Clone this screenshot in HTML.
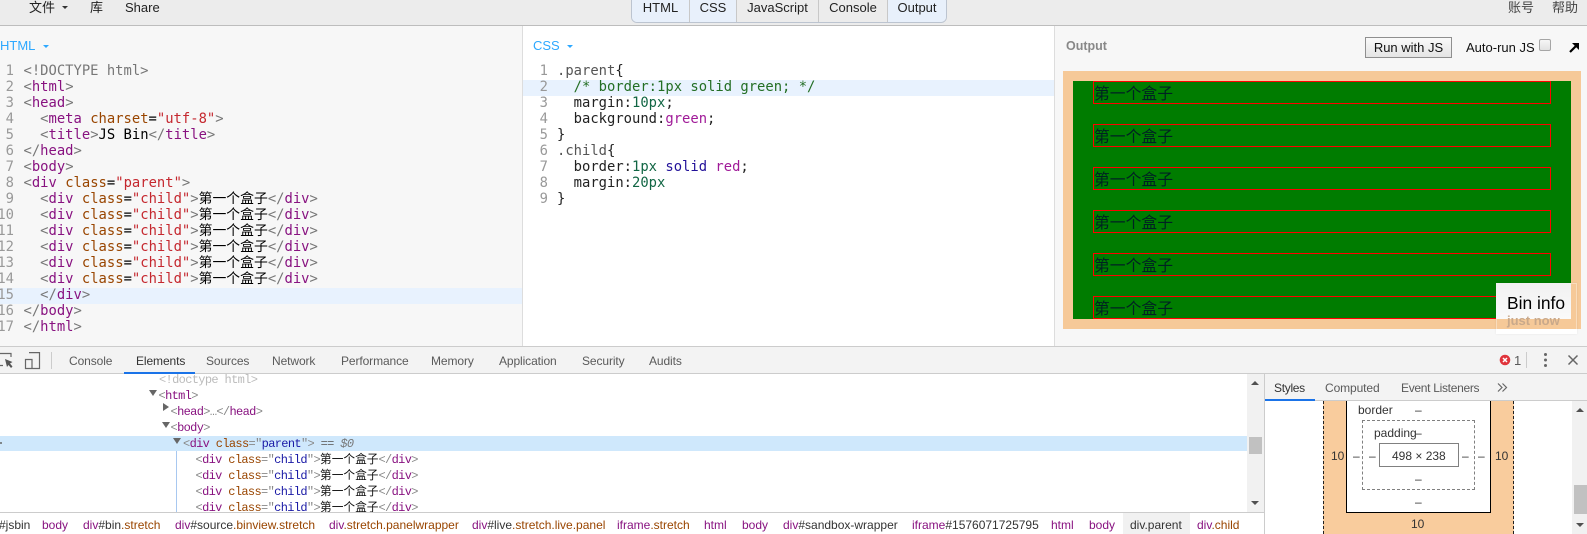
<!DOCTYPE html>
<html><head><meta charset="utf-8"><style>
html,body{margin:0;padding:0;background:#fff}
#r{position:relative;width:1587px;height:534px;overflow:hidden;font-family:"Liberation Sans","Noto Sans CJK SC",sans-serif;font-size:13px;color:#222}
.a,.b{position:absolute}
.a{white-space:pre;line-height:16px}
.code{position:absolute;font:13.85px/16px "DejaVu Sans Mono","WenQuanYi Zen Hei",monospace;white-space:pre;color:#333}
.code.n{color:#999;text-align:right}
.g{color:#777}.p{color:#881280}.o{color:#994500}.s{color:#c5282f}.k{color:#000}
.z{font-family:"WenQuanYi Zen Hei","Noto Sans CJK SC",sans-serif;color:#000;line-height:0}
.cm{color:#236e24}.nm{color:#116644}.kw{color:#a01a98}.at{color:#221199}.q{color:#555}
.t{position:absolute;left:0;font:12px/16px "Liberation Mono",monospace;letter-spacing:-.65px;white-space:pre;color:#888}
.t .p{color:#881280}.t .o{color:#994500}.t .l{color:#1a1aa6}
.t .z{font:11.7px/0 "WenQuanYi Zen Hei","Noto Sans CJK SC",sans-serif;letter-spacing:0;color:#111}
.dt{font-size:12px;color:#5a5a5a;letter-spacing:-.1px}
.bc{font-size:12px;color:#333}
.bc i{font-style:normal;color:#881280}.bc u{text-decoration:none;color:#994500}
.tab{position:absolute;top:0;height:22px;line-height:16px;text-align:center;color:#222;border-right:1px solid #c8c8c8;box-sizing:border-box;padding-top:0}
.box{position:absolute;left:1093px;width:458px;height:23px;box-sizing:border-box;border:1.3px solid #f00}
.bt{position:absolute;left:1094px;font:15.8px/22px "WenQuanYi Zen Hei","Noto Sans CJK SC",sans-serif;color:#022;white-space:pre}
.m{font-size:12px;color:#333}
</style></head><body><div id="r">
<!-- top bar -->
<div class="b" style="left:0;top:0;width:1587px;height:25px;background:#ececec;border-bottom:1px solid #bdbdbd"></div>
<span class="a" style="left:29px;top:0">文件</span>
<div class="b" style="left:62px;top:6px;border:3px solid transparent;border-top:3px solid #333;border-bottom:0"></div>
<span class="a" style="left:90px;top:0">库</span>
<span class="a" style="left:125px;top:0">Share</span>
<span class="a" style="left:1508px;top:0;color:#444">账号</span>
<span class="a" style="left:1552px;top:0;color:#444">帮助</span>
<div class="b" style="left:631px;top:-3px;width:316px;height:26px;border:1px solid #bcc4d0;border-radius:0 0 6px 6px;box-sizing:border-box;overflow:hidden;background:#ececec">
<div class="tab" style="left:0;width:58px;top:2px;background:#e8f0fb">HTML</div>
<div class="tab" style="left:58px;width:47px;top:2px;background:#e8f0fb">CSS</div>
<div class="tab" style="left:105px;width:82px;top:2px">JavaScript</div>
<div class="tab" style="left:187px;width:69px;top:2px">Console</div>
<div class="tab" style="left:256px;width:58px;top:2px;background:#e8f0fb;border-right:0">Output</div>
</div>
<!-- html panel -->
<div class="b" style="left:0;top:26px;width:522px;height:320px;background:#f7f7f7;border-right:1px solid #ddd"></div>
<div class="b" style="left:0;top:288px;width:522px;height:16px;background:#e8f2fe"></div>
<span class="a" style="left:0;top:38px;color:#2da8ff">HTML</span>
<div class="b" style="left:43px;top:45px;border:3px solid transparent;border-top:3px solid #2da8ff;border-bottom:0"></div>
<div class="code n" style="left:-10px;width:24px;top:63px">1
2
3
4
5
6
7
8
9
10
11
12
13
14
15
16
17</div>
<div class="code" style="left:23.5px;top:63px"><span class="g">&lt;!DOCTYPE html&gt;</span>
<span class="g">&lt;</span><span class="p">html</span><span class="g">&gt;</span>
<span class="g">&lt;</span><span class="p">head</span><span class="g">&gt;</span>
  <span class="g">&lt;</span><span class="p">meta</span> <span class="o">charset</span><span class="k">=</span><span class="s">"utf-8"</span><span class="g">&gt;</span>
  <span class="g">&lt;</span><span class="p">title</span><span class="g">&gt;</span><span class="k">JS Bin</span><span class="g">&lt;/</span><span class="p">title</span><span class="g">&gt;</span>
<span class="g">&lt;/</span><span class="p">head</span><span class="g">&gt;</span>
<span class="g">&lt;</span><span class="p">body</span><span class="g">&gt;</span>
<span class="g">&lt;</span><span class="p">div</span> <span class="o">class</span><span class="k">=</span><span class="s">"parent"</span><span class="g">&gt;</span>
  <span class="g">&lt;</span><span class="p">div</span> <span class="o">class</span><span class="k">=</span><span class="s">"child"</span><span class="g">&gt;</span><span class="z">第一个盒子</span><span class="g">&lt;/</span><span class="p">div</span><span class="g">&gt;</span>
  <span class="g">&lt;</span><span class="p">div</span> <span class="o">class</span><span class="k">=</span><span class="s">"child"</span><span class="g">&gt;</span><span class="z">第一个盒子</span><span class="g">&lt;/</span><span class="p">div</span><span class="g">&gt;</span>
  <span class="g">&lt;</span><span class="p">div</span> <span class="o">class</span><span class="k">=</span><span class="s">"child"</span><span class="g">&gt;</span><span class="z">第一个盒子</span><span class="g">&lt;/</span><span class="p">div</span><span class="g">&gt;</span>
  <span class="g">&lt;</span><span class="p">div</span> <span class="o">class</span><span class="k">=</span><span class="s">"child"</span><span class="g">&gt;</span><span class="z">第一个盒子</span><span class="g">&lt;/</span><span class="p">div</span><span class="g">&gt;</span>
  <span class="g">&lt;</span><span class="p">div</span> <span class="o">class</span><span class="k">=</span><span class="s">"child"</span><span class="g">&gt;</span><span class="z">第一个盒子</span><span class="g">&lt;/</span><span class="p">div</span><span class="g">&gt;</span>
  <span class="g">&lt;</span><span class="p">div</span> <span class="o">class</span><span class="k">=</span><span class="s">"child"</span><span class="g">&gt;</span><span class="z">第一个盒子</span><span class="g">&lt;/</span><span class="p">div</span><span class="g">&gt;</span>
  <span class="g">&lt;/</span><span class="p">div</span><span class="g">&gt;</span>
<span class="g">&lt;/</span><span class="p">body</span><span class="g">&gt;</span>
<span class="g">&lt;/</span><span class="p">html</span><span class="g">&gt;</span></div>
<!-- css panel -->
<div class="b" style="left:523px;top:80px;width:531px;height:16px;background:#e8f2fe"></div>
<span class="a" style="left:533px;top:38px;color:#2da8ff">CSS</span>
<div class="b" style="left:567px;top:45px;border:3px solid transparent;border-top:3px solid #2da8ff;border-bottom:0"></div>
<div class="code n" style="left:523px;width:25px;top:63px">1
2
3
4
5
6
7
8
9</div>
<div class="code" style="left:557px;top:63px;color:#222"><span class="q">.parent</span>{
  <span class="cm">/* border:1px solid green; */</span>
  margin:<span class="nm">10px</span>;
  background:<span class="kw">green</span>;
}
<span class="q">.child</span>{
  border:<span class="nm">1px</span> <span class="at">solid</span> <span class="kw">red</span>;
  margin:<span class="nm">20px</span>
}</div>
<!-- output panel -->
<div class="b" style="left:1054px;top:26px;width:533px;height:320px;background:#f7f7f7;border-left:1px solid #ddd;box-sizing:border-box"></div>
<span class="a" style="left:1066px;top:38px;color:#888;font-weight:bold;font-size:12.5px">Output</span>
<div class="b" style="left:1365px;top:37px;width:87px;height:21px;box-sizing:border-box;border:1px solid #8f8f8f;background:linear-gradient(#fafafa,#e4e4e4);text-align:center;line-height:19px;color:#111">Run with JS</div>
<span class="a" style="left:1466px;top:40px;color:#111">Auto-run JS</span>
<div class="b" style="left:1539px;top:39px;width:12px;height:12px;box-sizing:border-box;border:1px solid #a6a6a6;border-radius:2px;background:linear-gradient(#f6f6f6,#e2e2e2)"></div>
<svg class="b" style="left:1569px;top:42px" width="11" height="11" viewBox="0 0 11 11"><path d="M1 10 L8 3" stroke="#000" stroke-width="2.2"/><path d="M3 1 H10 V8 Z" fill="#000"/></svg>
<div class="b" style="left:1063px;top:71px;width:518px;height:258px;background:#f6c998"></div>
<div class="b" style="left:1073px;top:81px;width:498px;height:238px;background:#007c00"></div>
<div class="box" style="top:81px"></div><div class="box" style="top:124px"></div><div class="box" style="top:167px"></div><div class="box" style="top:210px"></div><div class="box" style="top:253px"></div><div class="box" style="top:296px"></div>
<span class="bt" style="top:81.5px">第一个盒子</span><span class="bt" style="top:124.5px">第一个盒子</span><span class="bt" style="top:167.5px">第一个盒子</span><span class="bt" style="top:210.5px">第一个盒子</span><span class="bt" style="top:253.5px">第一个盒子</span><span class="bt" style="top:296.5px">第一个盒子</span>
<div class="b" style="left:1496px;top:283px;width:81px;height:51px;box-sizing:border-box;border:1px solid rgba(255,255,255,.35);box-shadow:0 0 2px rgba(0,0,0,.08)"></div>
<div class="b" style="left:1496px;top:329px;width:81px;height:5px;background:#fff"></div>
<div class="b" style="left:1496px;top:283px;width:75px;height:36px;background:linear-gradient(#f1f1f1,#fafafa)"></div>
<span class="a" style="left:1507px;top:293px;font-size:17.4px;line-height:20px;color:#000">Bin info</span>
<span class="a" style="left:1507px;top:313px;font-size:13px;font-weight:bold;color:#c9a98b">just now</span>
<!-- devtools -->
<div class="b" style="left:0;top:346px;width:1587px;height:28px;background:#f3f3f3;border-top:1px solid #ccc;border-bottom:1px solid #ccc;box-sizing:border-box"></div>
<svg class="b" style="left:0;top:352px" width="42" height="18" viewBox="0 0 42 18" fill="none" stroke="#666" stroke-width="1.2"><path d="M0 1.5H11V5M0 13.5H3"/><path d="M5 7 L12.5 10 L10 11.5 L12.5 14.5 L11 16 L8.5 13 L7 15 Z" fill="#555" stroke="none"/><path d="M29 .6H39.5V16.5H25.5V7.5H32V16.5"/></svg>
<div class="b" style="left:51px;top:352px;width:1px;height:17px;background:#ccc"></div>
<div class="b" style="left:124px;top:372px;width:71px;height:2px;background:#1a73e8"></div>
<span class="a dt" style="left:69px;top:353px">Console</span>
<span class="a dt" style="left:136px;top:353px;color:#333">Elements</span>
<span class="a dt" style="left:206px;top:353px">Sources</span>
<span class="a dt" style="left:272px;top:353px">Network</span>
<span class="a dt" style="left:341px;top:353px">Performance</span>
<span class="a dt" style="left:431px;top:353px">Memory</span>
<span class="a dt" style="left:499px;top:353px">Application</span>
<span class="a dt" style="left:582px;top:353px">Security</span>
<span class="a dt" style="left:649px;top:353px">Audits</span>
<svg class="b" style="left:1499px;top:354px" width="12" height="12" viewBox="0 0 12 12"><circle cx="6" cy="6" r="5.3" fill="#e0343c"/><path d="M4 4L8 8M8 4L4 8" stroke="#fff" stroke-width="1.5"/></svg>
<span class="a dt" style="left:1514px;top:353px;font-size:13px">1</span>
<div class="b" style="left:1526px;top:352px;width:1px;height:16px;background:#ccc"></div>
<div class="b" style="left:1544px;top:353px;width:3px;height:3px;background:#666;border-radius:2px;box-shadow:0 5.5px 0 #666,0 11px 0 #666"></div>
<svg class="b" style="left:1567px;top:354px" width="12" height="12" viewBox="0 0 12 12"><path d="M1.5 1.5L10.5 10.5M10.5 1.5L1.5 10.5" stroke="#666" stroke-width="1.5"/></svg>
<!-- dom tree -->
<div class="b" style="left:0;top:436px;width:1247px;height:15px;background:#cfe8fc"></div>
<div class="b" style="left:176px;top:451px;width:1px;height:61px;background:#a8c8f0"></div>
<div class="b" style="left:0;top:442px;width:2px;height:2px;background:#666;border-radius:1px"></div>
<div class="b" style="left:0;top:374px;width:1247px;height:138px;overflow:hidden">
<div class="t" style="top:-2px;padding-left:159px;color:#bbb">&lt;!doctype html&gt;</div>
<div class="t" style="top:14px;padding-left:158.5px">&lt;<span class="p">html</span>&gt;</div>
<div class="t" style="top:30px;padding-left:170.5px">&lt;<span class="p">head</span>&gt;…&lt;/<span class="p">head</span>&gt;</div>
<div class="t" style="top:46px;padding-left:170.5px">&lt;<span class="p">body</span>&gt;</div>
<div class="t" style="top:62px;padding-left:183px">&lt;<span class="p">div</span> <span class="o">class</span>="<span class="l">parent</span>"&gt; <span style="color:#666">==</span> <i style="color:#777">$0</i></div>
<div class="t" style="top:78px;padding-left:195.5px">&lt;<span class="p">div</span> <span class="o">class</span>="<span class="l">child</span>"&gt;<span class="z">第一个盒子</span>&lt;/<span class="p">div</span>&gt;</div>
<div class="t" style="top:94px;padding-left:195.5px">&lt;<span class="p">div</span> <span class="o">class</span>="<span class="l">child</span>"&gt;<span class="z">第一个盒子</span>&lt;/<span class="p">div</span>&gt;</div>
<div class="t" style="top:110px;padding-left:195.5px">&lt;<span class="p">div</span> <span class="o">class</span>="<span class="l">child</span>"&gt;<span class="z">第一个盒子</span>&lt;/<span class="p">div</span>&gt;</div>
<div class="t" style="top:126px;padding-left:195.5px">&lt;<span class="p">div</span> <span class="o">class</span>="<span class="l">child</span>"&gt;<span class="z">第一个盒子</span>&lt;/<span class="p">div</span>&gt;</div>
</div>
<div class="b" style="left:149px;top:390px;border:4px solid transparent;border-top:6px solid #666;border-bottom:0"></div>
<div class="b" style="left:163px;top:403px;border:4px solid transparent;border-left:6px solid #666;border-right:0"></div>
<div class="b" style="left:162px;top:422px;border:4px solid transparent;border-top:6px solid #666;border-bottom:0"></div>
<div class="b" style="left:173px;top:438px;border:4px solid transparent;border-top:6px solid #666;border-bottom:0"></div>
<!-- dom scrollbar -->
<div class="b" style="left:1247px;top:374px;width:17px;height:138px;background:#f1f1f1"></div>
<div class="b" style="left:1249px;top:437px;width:13px;height:17px;background:#c1c1c1"></div>
<div class="b" style="left:1251px;top:381px;border:4px solid transparent;border-bottom:4px solid #505050;border-top:0"></div>
<div class="b" style="left:1251px;top:501px;border:4px solid transparent;border-top:4px solid #505050;border-bottom:0"></div>
<!-- breadcrumbs -->
<div class="b" style="left:0;top:512px;width:1264px;height:1px;background:#ccc"></div>
<div class="b" style="left:1123px;top:513px;width:67px;height:21px;background:#f1f1f1"></div>
<span class="a bc" style="left:-1px;top:517px">#jsbin</span>
<span class="a bc" style="left:42px;top:517px"><i>body</i></span>
<span class="a bc" style="left:83px;top:517px"><i>div</i>#bin<u>.stretch</u></span>
<span class="a bc" style="left:175px;top:517px"><i>div</i>#source<u>.binview.stretch</u></span>
<span class="a bc" style="left:329px;top:517px"><i>div</i><u>.stretch.panelwrapper</u></span>
<span class="a bc" style="left:472px;top:517px"><i>div</i>#live<u>.stretch.live.panel</u></span>
<span class="a bc" style="left:617px;top:517px"><i>iframe</i><u>.stretch</u></span>
<span class="a bc" style="left:704px;top:517px"><i>html</i></span>
<span class="a bc" style="left:742px;top:517px"><i>body</i></span>
<span class="a bc" style="left:783px;top:517px"><i>div</i>#sandbox-wrapper</span>
<span class="a bc" style="left:912px;top:517px"><i>iframe</i>#1576071725795</span>
<span class="a bc" style="left:1051px;top:517px"><i>html</i></span>
<span class="a bc" style="left:1089px;top:517px"><i>body</i></span>
<span class="a bc" style="left:1130px;top:517px">div.parent</span>
<span class="a bc" style="left:1197px;top:517px"><i>div</i><u>.child</u></span>
<!-- styles pane -->
<div class="b" style="left:1264px;top:374px;width:1px;height:160px;background:#ccc"></div>
<div class="b" style="left:1265px;top:374px;width:322px;height:27px;background:#f3f3f3;border-bottom:1px solid #ccc;box-sizing:border-box"></div>
<div class="b" style="left:1265px;top:399px;width:50px;height:2px;background:#1a73e8"></div>
<span class="a dt" style="left:1274px;top:380px;color:#333;letter-spacing:-.3px">Styles</span>
<span class="a dt" style="left:1325px;top:380px">Computed</span>
<span class="a dt" style="left:1401px;top:380px;letter-spacing:-.3px">Event Listeners</span>
<svg class="b" style="left:1497px;top:382px" width="11" height="11" viewBox="0 0 11 11" fill="none" stroke="#666" stroke-width="1.2"><path d="M1 1.5L5 5.5L1 9.5M5.5 1.5L9.5 5.5L5.5 9.5"/></svg>
<div class="b" style="left:1323px;top:401px;width:191px;height:133px;box-sizing:border-box;background:#f9cc9d;border-left:1px dashed #222;border-right:1px dashed #222"></div>
<div class="b" style="left:1346px;top:401px;width:145px;height:112px;box-sizing:border-box;background:#fff;border:1px solid #000;border-top:0"></div>
<div class="b" style="left:1362px;top:420px;width:113px;height:70px;box-sizing:border-box;background:#fff;border:1px dashed #808080"></div>
<div class="b" style="left:1379px;top:443px;width:80px;height:24px;box-sizing:border-box;background:#fff;border:1px solid #808080"></div>
<span class="a m" style="left:1358px;top:402px">border</span>
<span class="a m" style="left:1374px;top:425px">padding</span>
<span class="a m" style="left:1392px;top:448px">498 × 238</span>
<span class="a m" style="left:1415px;top:402px">–</span>
<span class="a m" style="left:1415px;top:425px">–</span>
<span class="a m" style="left:1415px;top:471px">–</span>
<span class="a m" style="left:1415px;top:494px">–</span>
<span class="a m" style="left:1411px;top:516px">10</span>
<span class="a m" style="left:1331px;top:448px">10</span>
<span class="a m" style="left:1495px;top:448px">10</span>
<span class="a m" style="left:1353px;top:448px">–</span>
<span class="a m" style="left:1369px;top:448px">–</span>
<span class="a m" style="left:1462px;top:448px">–</span>
<span class="a m" style="left:1478px;top:448px">–</span>
<div class="b" style="left:1572px;top:401px;width:15px;height:133px;background:#f1f1f1"></div>
<div class="b" style="left:1574px;top:485px;width:13px;height:29px;background:#c1c1c1"></div>
<div class="b" style="left:1576px;top:408px;border:4px solid transparent;border-bottom:4px solid #505050;border-top:0"></div>
<div class="b" style="left:1576px;top:523px;border:4px solid transparent;border-top:4px solid #505050;border-bottom:0"></div>
</div></body></html>
